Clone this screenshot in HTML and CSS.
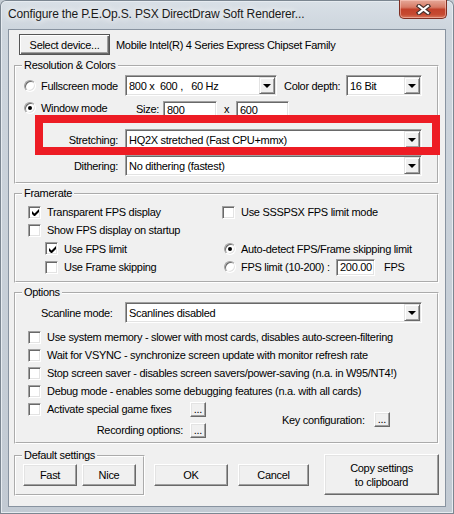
FILE: index.html
```html
<!DOCTYPE html>
<html lang="en">
<head>
  <meta charset="UTF-8">
  <title>Configure the P.E.Op.S. PSX DirectDraw Soft Renderer...</title>
  <link rel="stylesheet" href="styles.css">
</head>
<body>
  <div class="window">
    <div class="titlebar">
      <span class="title">Configure the P.E.Op.S. PSX DirectDraw Soft Renderer...</span>
      <div class="close">
        <svg width="15" height="11" viewBox="0 0 15 11">
          <path d="M3 2 L12 9 M12 2 L3 9" stroke="#47302c" stroke-width="4.4" stroke-linecap="square" fill="none"/>
          <path d="M3 2 L12 9 M12 2 L3 9" stroke="#ffffff" stroke-width="2.2" stroke-linecap="square" fill="none"/>
        </svg>
      </div>
    </div>

    <div class="client">
      <div class="device-row">
        <button class="btn btn-default device-btn">Select device...</button>
        <span class="device-name">Mobile Intel(R) 4 Series Express Chipset Family</span>
      </div>

      <fieldset class="group res">
        <legend>Resolution &amp; Colors</legend>
        <div class="row r1">
          <label class="opt radio-opt mode-opt"><span class="radio"></span>Fullscreen mode</label>
          <div class="combo w-mode"><span class="combo-text">800 x &nbsp;600 , &nbsp; 60 Hz</span><span class="combo-btn"><i></i></span></div>
          <span class="depth-lbl">Color depth:</span>
          <div class="combo w-depth"><span class="combo-text">16 Bit</span><span class="combo-btn"><i></i></span></div>
        </div>
        <div class="row r2">
          <label class="opt radio-opt win-opt"><span class="radio on"></span>Window mode</label>
          <span class="size-lbl">Size:</span>
          <div class="edit w-sx">800</div>
          <span class="x-lbl">x</span>
          <div class="edit w-sy">600</div>
        </div>
        <div class="row r3">
          <span class="field-lbl">Stretching:</span>
          <div class="combo w-wide"><span class="combo-text">HQ2X stretched (Fast CPU+mmx)</span><span class="combo-btn"><i></i></span></div>
        </div>
        <div class="row r4">
          <span class="field-lbl">Dithering:</span>
          <div class="combo w-wide"><span class="combo-text">No dithering (fastest)</span><span class="combo-btn"><i></i></span></div>
        </div>
      </fieldset>

      <fieldset class="group fps">
        <legend>Framerate</legend>
        <div class="fr-grid">
          <label class="opt"><span class="check on"></span>Transparent FPS display</label>
          <label class="opt"><span class="check"></span>Use SSSPSX FPS limit mode</label>
          <label class="opt"><span class="check"></span>Show FPS display on startup</label>
          <span></span>
          <label class="opt sub"><span class="check on"></span>Use FPS limit</label>
          <label class="opt radio-opt right-radio"><span class="radio on"></span>Auto-detect FPS/Frame skipping limit</label>
          <label class="opt sub"><span class="check"></span>Use Frame skipping</label>
          <div class="fps-limit">
            <label class="opt radio-opt right-radio fps-lbl"><span class="radio"></span>FPS limit (10-200) :</label>
            <div class="edit w-fps">200.00</div>
            <span class="fps-unit">FPS</span>
          </div>
        </div>
      </fieldset>

      <fieldset class="group opts">
        <legend>Options</legend>
        <div class="row scan-row">
          <span class="scan-lbl">Scanline mode:</span>
          <div class="combo w-wide"><span class="combo-text">Scanlines disabled</span><span class="combo-btn"><i></i></span></div>
        </div>
        <div class="check-list">
          <label class="opt"><span class="check"></span>Use system memory - slower with most cards, disables auto-screen-filtering</label>
          <label class="opt"><span class="check"></span>Wait for VSYNC - synchronize screen update with monitor refresh rate</label>
          <label class="opt"><span class="check"></span>Stop screen saver - disables screen savers/power-saving (n.a. in W95/NT4!)</label>
          <label class="opt"><span class="check"></span>Debug mode - enables some debugging features (n.a. with all cards)</label>
        </div>
        <div class="opt-tail">
          <div class="tail-left">
            <div class="tail-row">
              <label class="opt fix-opt"><span class="check"></span>Activate special game fixes</label>
              <button class="btn dots">...</button>
            </div>
            <div class="tail-row rec-row">
              <span class="rec-lbl">Recording options:</span>
              <button class="btn dots">...</button>
            </div>
          </div>
          <div class="key-cfg">
            <span class="key-lbl">Key configuration:</span>
            <button class="btn dots">...</button>
          </div>
        </div>
      </fieldset>

      <div class="bottom">
        <fieldset class="group defaults">
          <legend>Default settings</legend>
          <div class="def-btns">
            <button class="btn small-btn">Fast</button>
            <button class="btn small-btn">Nice</button>
          </div>
        </fieldset>
        <button class="btn ok-btn">OK</button>
        <button class="btn cancel-btn">Cancel</button>
        <button class="btn copy-btn">Copy settings<br>to clipboard</button>
      </div>

      <div class="highlight"></div>
    </div>
  </div>
</body>
</html>
```

FILE: styles.css
```css
* {
  box-sizing: border-box;
}

body {
  margin: 0;
  width: 454px;
  height: 514px;
  overflow: hidden;
  font-family: "Liberation Sans", Arial, sans-serif;
  font-size: 11px;
  letter-spacing: -0.3px;
  color: #000000;
  background-color: #c4ccd4;
}

.window {
  width: 454px;
  height: 514px;
  border-radius: 6px 6px 0 0;
  background: linear-gradient(180deg, #d9e0e7 0, #cdd5dd 30px, #c2cad3 100%);
  box-shadow: inset 0 0 0 1px #7b8691, inset 0 0 0 2px #e6ebf0;
}

/* title bar */
.titlebar {
  display: flex;
  align-items: flex-start;
  height: 29px;
}

.title {
  padding: 6px 0 0 8px;
  font-size: 12px;
  line-height: 16px;
  letter-spacing: -0.15px;
  color: #1a1a1a;
  text-shadow: 0 0 6px #ffffff, 0 0 10px #ffffff;
}

.close {
  display: flex;
  align-items: center;
  justify-content: center;
  width: 48px;
  height: 19px;
  margin-left: auto;
  margin-right: 7px;
  border: 1px solid #7e2e22;
  border-top: none;
  border-radius: 0 0 5px 5px;
  background: linear-gradient(180deg, #e6a999 0, #d77b66 40%, #c2422b 52%, #c64a31 80%, #d7785d 100%);
  box-shadow: inset 0 0 0 1px rgba(255, 210, 200, 0.5);
}

/* dialog body */
.client {
  position: relative;
  width: 438px;
  height: 478px;
  margin-left: 8px;
  padding-left: 5px;
  background-color: #f0f0f0;
  border: 1px solid #8893a0;
}

.row {
  display: flex;
  align-items: center;
  height: 21px;
}

.device-row {
  display: flex;
  align-items: center;
  height: 21px;
  margin-top: 4px;
  padding-left: 5px;
}

.device-name {
  margin-left: 6px;
}

/* classic controls */
.btn {
  font: inherit;
  letter-spacing: inherit;
  color: #000000;
  padding: 0;
  background-color: #f0f0f0;
  border: 1px solid;
  border-color: #ffffff #696969 #696969 #ffffff;
  box-shadow: inset -1px -1px 0 #a0a0a0, inset 1px 1px 0 #e3e3e3;
}

.btn-default {
  border-color: #555555;
  box-shadow: inset 1px 1px 0 #ffffff, inset -1px -1px 0 #696969, inset -2px -2px 0 #a0a0a0;
}

.device-btn {
  width: 91px;
  height: 21px;
}

.combo {
  display: flex;
  align-items: center;
  height: 21px;
  background-color: #ffffff;
  border: 1px solid;
  border-color: #a0a0a0 #ffffff #ffffff #a0a0a0;
  box-shadow: inset 1px 1px 0 #696969, inset -1px -1px 0 #e3e3e3;
}

.combo-text {
  flex: 1;
  padding-left: 3px;
  white-space: nowrap;
}

.combo-btn {
  display: flex;
  align-items: center;
  justify-content: center;
  width: 16px;
  height: 17px;
  margin-right: 1px;
  background-color: #f0f0f0;
  border: 1px solid;
  border-color: #e3e3e3 #696969 #696969 #e3e3e3;
  box-shadow: inset 1px 1px 0 #ffffff, inset -1px -1px 0 #a0a0a0;
}

.combo-btn i {
  width: 0;
  height: 0;
  border-left: 4px solid transparent;
  border-right: 4px solid transparent;
  border-top: 4px solid #000000;
  margin-top: 1px;
}

.edit {
  height: 19px;
  padding: 2px 0 0 3px;
  line-height: 13px;
  background-color: #ffffff;
  border: 1px solid;
  border-color: #a0a0a0 #ffffff #ffffff #a0a0a0;
  box-shadow: inset 1px 1px 0 #696969, inset -1px -1px 0 #e3e3e3;
}

.check {
  display: inline-flex;
  align-items: center;
  justify-content: center;
  flex: none;
  width: 13px;
  height: 13px;
  background-color: #ffffff;
  border: 1px solid;
  border-color: #a0a0a0 #ffffff #ffffff #a0a0a0;
  box-shadow: inset 1px 1px 0 #696969, inset -1px -1px 0 #e3e3e3;
}

.check.on::after {
  content: '';
  width: 7px;
  height: 7px;
  margin: 1px 0 0 1px;
  background: url("data:image/svg+xml,%3Csvg xmlns='http://www.w3.org/2000/svg' width='7' height='7'%3E%3Cpath d='M0 2v3l2 2h1l4-4V0L2.5 4.5z' fill='%23000'/%3E%3C/svg%3E") no-repeat;
}

.radio {
  position: relative;
  flex: none;
  width: 12px;
  height: 12px;
  border-radius: 50%;
  background-color: #ffffff;
  border: 1px solid;
  border-color: #a0a0a0 #ffffff #ffffff #a0a0a0;
  box-shadow: inset 1px 1px 0 #696969, inset -1px -1px 0 #e3e3e3;
}

.radio.on::after {
  content: '';
  position: absolute;
  left: 3px;
  top: 3px;
  width: 4px;
  height: 4px;
  border-radius: 50%;
  background-color: #000000;
}

.opt {
  display: flex;
  align-items: center;
  gap: 6px;
  white-space: nowrap;
}

.radio-opt {
  gap: 5px;
}

/* group boxes */
.group {
  margin: 0;
  padding: 0;
  min-width: 0;
  width: 425px;
  border: 2px groove #ffffff;
}

.group legend {
  margin-left: 6px;
  padding: 0 2px;
  height: 13px;
  line-height: 13px;
}

.res {
  height: 125px;
  margin-top: 4px;
}

.r1 {
  margin-top: 3px;
  padding-left: 8px;
}

.mode-opt {
  width: 101px;
}

.w-mode {
  width: 152px;
}

.depth-lbl {
  width: 62px;
  margin-left: 7px;
}

.w-depth {
  width: 76px;
}

.r2 {
  align-items: flex-start;
  margin-top: 5px;
  padding-left: 8px;
}

.win-opt {
  width: 112px;
  height: 13px;
}

.size-lbl {
  width: 27px;
  margin-top: 2px;
  line-height: 13px;
}

.w-sx {
  width: 54px;
}

.x-lbl {
  width: 19px;
  margin-top: 2px;
  line-height: 13px;
  text-align: center;
}

.w-sy {
  width: 53px;
}

.r3 {
  margin-top: 7px;
}

.r4 {
  margin-top: 5px;
}

.field-lbl {
  width: 109px;
  padding-right: 7px;
  text-align: right;
}

.w-wide {
  width: 297px;
}

.fps {
  height: 96px;
  margin-top: 3px;
}

.fr-grid {
  display: grid;
  grid-template-columns: 194px 1fr;
  grid-template-rows: 18px 18px 19px 18px;
  padding: 3px 0 0 12px;
}

.sub {
  padding-left: 17px;
}

.right-radio {
  padding-left: 2px;
}

.fps-limit {
  display: flex;
  align-items: center;
}

.fps-lbl {
  width: 114px;
}

.w-fps {
  width: 39px;
  height: 17px;
  padding-top: 1px;
}

.fps-unit {
  margin-left: 9px;
}

.opts {
  height: 158px;
  margin-top: 3px;
}

.scan-row {
  margin-top: 3px;
  padding-left: 25px;
}

.scan-lbl {
  width: 84px;
}

.check-list {
  display: flex;
  flex-direction: column;
  margin-top: 5px;
  padding-left: 12px;
}

.check-list .opt,
.tail-row {
  height: 18px;
}

.opt-tail {
  display: flex;
  align-items: center;
  padding-left: 12px;
}

.tail-row {
  display: flex;
  align-items: center;
}

.rec-row {
  margin-top: 3px;
}

.fix-opt {
  width: 162px;
}

.rec-lbl {
  width: 162px;
  padding-right: 7px;
  text-align: right;
}

.dots {
  width: 16px;
  height: 15px;
  line-height: 9px;
  font-size: 11px;
}

.key-cfg {
  display: flex;
  align-items: center;
  margin-left: 76px;
}

.key-lbl {
  width: 92px;
}

/* bottom buttons */
.bottom {
  display: flex;
  align-items: flex-start;
  margin-top: 5px;
}

.defaults {
  width: 131px;
  height: 47px;
}

.def-btns {
  display: flex;
  gap: 5px;
  padding: 2px 0 0 7px;
}

.small-btn {
  width: 54px;
  height: 22px;
}

.ok-btn {
  width: 74px;
  height: 22px;
  margin: 15px 0 0 9px;
}

.cancel-btn {
  width: 71px;
  height: 22px;
  margin: 15px 0 0 10px;
}

.copy-btn {
  width: 115px;
  height: 41px;
  margin: 5px 0 0 15px;
  line-height: 14px;
}

/* red mark drawn over the dialog */
.highlight {
  position: absolute;
  left: 26px;
  top: 85px;
  width: 405px;
  height: 40px;
  border: 8px solid #ed1c24;
}
```
